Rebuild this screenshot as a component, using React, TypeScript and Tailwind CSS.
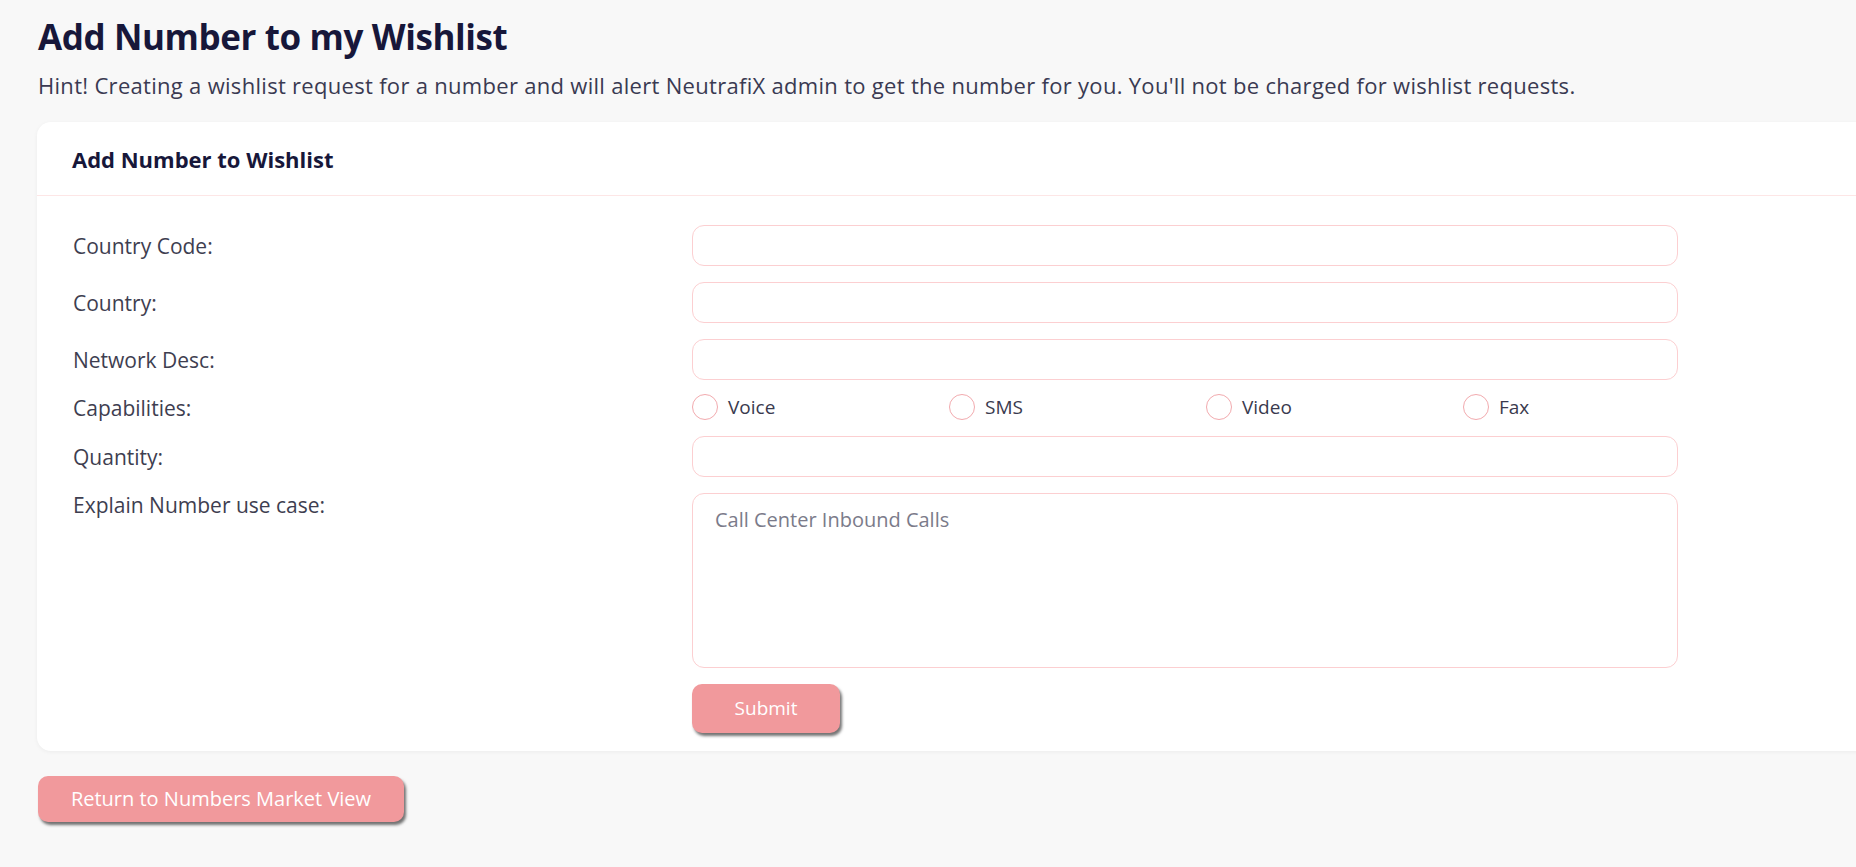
import React from "react";

const font = { fontFamily: "'Open Sans', 'Noto Sans', sans-serif" };

function Field() {
  return (
    <div className="h-[41px] w-[986px] rounded-[12px] border-[1.5px] border-[#fccfd1] bg-white" />
  );
}

function Radio({ label }: { label: string }) {
  return (
    <label className="flex w-[257px] shrink-0 items-center gap-[10px]">
      <span className="h-[26px] w-[26px] shrink-0 rounded-full border-[1.5px] border-[#f2aaae] bg-white" />
      <span className="text-[19px] leading-[24px] text-[#3a3a4e]">{label}</span>
    </label>
  );
}

function Label({ children, top }: { children: React.ReactNode; top?: boolean }) {
  return (
    <div
      className={`flex ${top ? "h-[24px] items-start" : "items-center"} text-[21px] leading-[24px] text-[#3e3e50]`}
    >
      {children}
    </div>
  );
}

export default function App() {
  return (
    <div className="min-h-screen overflow-hidden bg-[#f8f8f8] pl-[38px] pt-[16px]" style={font}>
      <h1 className="text-[35px] font-bold leading-[42px] tracking-[-0.4px] text-[#17173a]">Add Number to my Wishlist</h1>
      <p className="mt-[13px] text-[22px] leading-[28px] tracking-[0.3px] text-[#3a3a52]">
        Hint! Creating a wishlist request for a number and will alert NeutrafiX admin to get the number for you. You'll not be charged for wishlist requests.
      </p>
      <div className="mt-[23px] w-[1900px] -ml-[1px] rounded-[14px] bg-white shadow-[0_1px_4px_rgba(0,0,0,0.05)]">
        <div className="flex h-[74px] items-center border-b-[1.5px] border-[#fde6e6] px-[35px]">
          <h2 className="text-[22px] font-bold leading-[28px] text-[#17173a]">Add Number to Wishlist</h2>
        </div>
        <div className="grid grid-cols-[619px_986px] gap-y-[16px] pl-[36px] pt-[29px] pb-[18px]">
          <Label>Country Code:</Label>
          <Field />
          <Label>Country:</Label>
          <Field />
          <Label>Network Desc:</Label>
          <Field />
          <Label>Capabilities:</Label>
          <div className="flex h-[22px] items-center">
            <Radio label="Voice" />
            <Radio label="SMS" />
            <Radio label="Video" />
            <Radio label="Fax" />
          </div>
          <Label>Quantity:</Label>
          <Field />
          <Label top>Explain Number use case:</Label>
          <div className="h-[175px] w-[986px] rounded-[12px] border-[1.5px] border-[#fccfd1] bg-white px-[22px] pt-[11px]">
            <span className="text-[20px] text-[#7b7b8a]">Call Center Inbound Calls</span>
          </div>
          <div />
          <div>
            <button className="h-[49px] w-[148px] rounded-[10px] bg-[#f1999c] text-[19px] text-white shadow-[2px_3px_3px_rgba(0,0,0,0.55)]">
              Submit
            </button>
          </div>
        </div>
      </div>
      <button className="mt-[25px] h-[46px] w-[366px] rounded-[10px] bg-[#f1999c] text-[20px] text-white shadow-[2px_3px_3px_rgba(0,0,0,0.55)]">
        Return to Numbers Market View
      </button>
    </div>
  );
}
